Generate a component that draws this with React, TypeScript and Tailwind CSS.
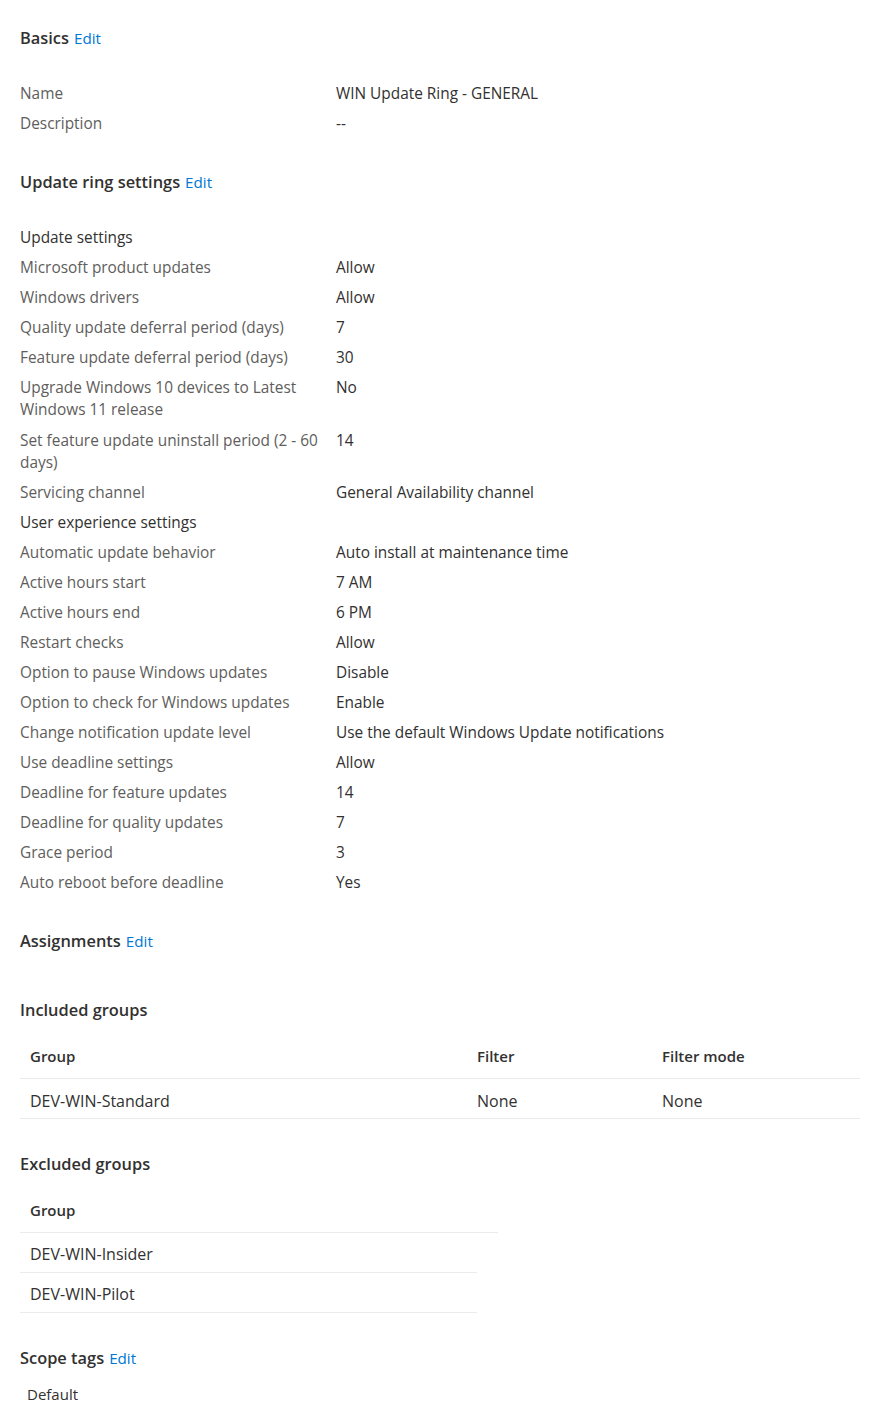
import React from "react";

type Row = { label: string; value?: string; group?: boolean; extra?: boolean };

const basics: Row[] = [
  { label: "Name", value: "WIN Update Ring - GENERAL" },
  { label: "Description", value: "--" },
];

const ringSettings: Row[] = [
  { label: "Update settings", group: true },
  { label: "Microsoft product updates", value: "Allow" },
  { label: "Windows drivers", value: "Allow" },
  { label: "Quality update deferral period (days)", value: "7" },
  { label: "Feature update deferral period (days)", value: "30" },
  { label: "Upgrade Windows 10 devices to Latest Windows 11 release", value: "No", extra: true },
  { label: "Set feature update uninstall period (2 - 60 days)", value: "14" },
  { label: "Servicing channel", value: "General Availability channel" },
  { label: "User experience settings", group: true },
  { label: "Automatic update behavior", value: "Auto install at maintenance time" },
  { label: "Active hours start", value: "7 AM" },
  { label: "Active hours end", value: "6 PM" },
  { label: "Restart checks", value: "Allow" },
  { label: "Option to pause Windows updates", value: "Disable" },
  { label: "Option to check for Windows updates", value: "Enable" },
  { label: "Change notification update level", value: "Use the default Windows Update notifications" },
  { label: "Use deadline settings", value: "Allow" },
  { label: "Deadline for feature updates", value: "14" },
  { label: "Deadline for quality updates", value: "7" },
  { label: "Grace period", value: "3" },
  { label: "Auto reboot before deadline", value: "Yes" },
];

const SectionHeading: React.FC<{ title: string; edit?: boolean }> = ({ title, edit }) => (
  <h2 className="text-[16.4px] leading-[22px] font-semibold text-[#323130]">
    {title}
    {edit && <a className="ml-[5px] font-normal text-[15.2px] text-[#0078d4] cursor-pointer">Edit</a>}
  </h2>
);

const PropertyList: React.FC<{ rows: Row[] }> = ({ rows }) => (
  <div className="flex flex-col">
    {rows.map((row, i) => (
      <div key={i} className={`flex pt-[4px] leading-[22px] text-[15.4px] ${row.extra ? "pb-[5px]" : "pb-[4px]"}`}>
        <div className={`w-[316px] pr-[16px] ${row.group ? "text-[#323130]" : "text-[#605e5c]"}`}>
          {row.label}
        </div>
        <div className="flex-1 text-[#323130]">{row.value}</div>
      </div>
    ))}
  </div>
);

export default function App() {
  return (
    <div
      className="bg-white min-h-screen px-[20px] pt-[27px] pb-[20px] text-[#323130]"
      style={{ fontFamily: '"Segoe UI", "Open Sans", "Noto Sans", sans-serif' }}
    >
      <SectionHeading title="Basics" edit />
      <div className="mt-[30px]">
        <PropertyList rows={basics} />
      </div>

      <div className="mt-[32px]">
        <SectionHeading title="Update ring settings" edit />
      </div>
      <div className="mt-[30px]">
        <PropertyList rows={ringSettings} />
      </div>

      <div className="mt-[32px]">
        <SectionHeading title="Assignments" edit />
      </div>

      <div className="mt-[47px]">
        <SectionHeading title="Included groups" />
      </div>
      <div className="mt-[14px] w-[840px]">
        <div className="grid grid-cols-[457px_185px_1fr] h-[44px] items-center text-[15px] font-semibold border-b border-[#edebe9]">
          <div className="pl-[10px]">Group</div>
          <div>Filter</div>
          <div>Filter mode</div>
        </div>
        <div className="grid grid-cols-[457px_185px_1fr] h-[40px] items-center pt-[4px] text-[16px] border-b border-[#edebe9]">
          <div className="pl-[10px]">DEV-WIN-Standard</div>
          <div>None</div>
          <div>None</div>
        </div>
      </div>

      <div className="mt-[34px]">
        <SectionHeading title="Excluded groups" />
      </div>
      <div className="mt-[14px]">
        <div className="w-[478px] h-[44px] flex items-center pl-[10px] text-[15px] font-semibold border-b border-[#edebe9]">
          Group
        </div>
        {["DEV-WIN-Insider", "DEV-WIN-Pilot"].map((g) => (
          <div
            key={g}
            className="w-[457px] h-[40px] flex items-center pt-[2px] pl-[10px] text-[16px] border-b border-[#edebe9]"
          >
            {g}
          </div>
        ))}
      </div>

      <div className="mt-[34px]">
        <SectionHeading title="Scope tags" edit />
      </div>
      <div className="mt-[14px] pl-[7px] text-[15px] leading-[22px]">Default</div>
    </div>
  );
}
